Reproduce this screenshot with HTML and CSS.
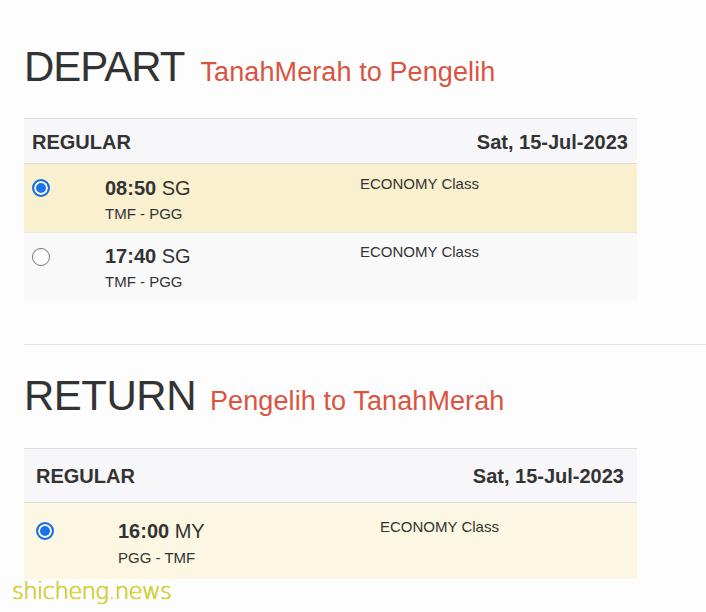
FILE: index.html
```html
<!DOCTYPE html>
<html lang="en">
<head>
    <meta charset="UTF-8">
    <meta name="viewport" content="width=device-width, initial-scale=1.0">
    <title>Select Trip</title>
    <link rel="stylesheet" href="styles.css">
</head>
<body>
    <div class="page">
        <!-- Ida -->
        <section class="leg depart">
            <h2 class="leg-title">DEPART<span class="route">TanahMerah to Pengelih</span></h2>
            <div class="trip-table">
                <div class="trip-head">
                    <span>REGULAR</span>
                    <span>Sat, 15-Jul-2023</span>
                </div>
                <label class="trip-row selected">
                    <input type="radio" name="depart" checked>
                    <div class="trip-time">
                        <div class="time"><b>08:50</b> SG</div>
                        <div class="code">TMF - PGG</div>
                    </div>
                    <div class="trip-class">ECONOMY Class</div>
                </label>
                <label class="trip-row">
                    <input type="radio" name="depart">
                    <div class="trip-time">
                        <div class="time"><b>17:40</b> SG</div>
                        <div class="code">TMF - PGG</div>
                    </div>
                    <div class="trip-class">ECONOMY Class</div>
                </label>
            </div>
        </section>

        <hr class="divider">

        <!-- Volta -->
        <section class="leg return">
            <h2 class="leg-title">RETURN<span class="route">Pengelih to TanahMerah</span></h2>
            <div class="trip-table">
                <div class="trip-head">
                    <span>REGULAR</span>
                    <span>Sat, 15-Jul-2023</span>
                </div>
                <label class="trip-row selected">
                    <input type="radio" name="return" checked>
                    <div class="trip-time">
                        <div class="time"><b>16:00</b> MY</div>
                        <div class="code">PGG - TMF</div>
                    </div>
                    <div class="trip-class">ECONOMY Class</div>
                </label>
            </div>
        </section>
    </div>

    <div class="watermark">shicheng.news</div>
</body>
</html>
```

FILE: styles.css
```css
/* Estilo do corpo */
body {
    font-family: "Liberation Sans", Arial, sans-serif;
    background-color: #fdfdfd;
    color: #333;
    margin: 0;
    padding: 0;
}

/* Contêiner principal */
.page {
    padding: 46px 0 0 24px;
}

/* Título de cada trecho */
.leg-title {
    margin: 0 0 30px;
    font-size: 42px;
    font-weight: normal;
    line-height: 42px;
    letter-spacing: -1px;
    color: #333;
}

.route {
    margin-left: 16px;
    font-size: 27px;
    line-height: 27px;
    letter-spacing: 0.1px;
    color: #da5440;
}

/* Tabela de viagens */
.trip-table {
    width: 613px;
    border-top: 1px solid #dedede;
}

.trip-head {
    display: flex;
    justify-content: space-between;
    padding: 13px 9px 11px 8px;
    background-color: #f7f7f9;
    border-bottom: 1px solid #dedede;
    font-size: 20px;
    font-weight: bold;
    line-height: 20px;
}

.trip-row {
    display: grid;
    grid-template-columns: 73px 255px 1fr;
    align-items: start;
    padding: 10.5px 8px 9px;
    background-color: #f9f9fa;
    cursor: pointer;
}

.trip-row + .trip-row {
    border-top: 1px solid #e6e6e6;
}

.trip-row.selected {
    background-color: #f9f0cf;
}

/* Botão de rádio */
.trip-row input {
    appearance: none;
    -webkit-appearance: none;
    width: 18px;
    height: 18px;
    margin: 4.5px 0 0 -0.5px;
    border: 1.5px solid #767676;
    border-radius: 50%;
    background-color: #fff;
    box-sizing: border-box;
}

.trip-row input:checked {
    border: 2px solid #1a6fe0;
    background-color: #1a73e8;
    box-shadow: inset 0 0 0 2px #fff;
}

.trip-time {
    margin-top: 3px;
}

.time {
    font-size: 20px;
    line-height: 20px;
}

.code {
    margin-top: 7px;
    font-size: 15px;
    line-height: 18px;
}

.trip-class {
    font-size: 15px;
    line-height: 18px;
}

/* Linha divisória */
.divider {
    margin: 44px 0 30px;
    border: none;
    border-top: 1px solid #e4e4e6;
}

/* Ajustes do trecho de volta */
.return .leg-title {
    letter-spacing: -0.5px;
    margin-bottom: 31px;
}

.return .route {
    margin-left: 14px;
}

.return .trip-head {
    padding: 17px 13px 16px 12px;
}

.return .trip-row {
    grid-template-columns: 81.5px 262px 1fr;
    padding: 15px 12.5px 12.5px;
}

.return .trip-row input {
    margin-top: 3.5px;
}

.return .code {
    margin-top: 7.5px;
}

.return .trip-row.selected {
    background-color: #fcf7e2;
}

/* Marca d'água */
.watermark {
    position: absolute;
    left: 12px;
    top: 576px;
    font-family: "DejaVu Sans", sans-serif;
    font-size: 23px;
    font-weight: 200;
    line-height: 30px;
    letter-spacing: -0.8px;
    color: #e2dc10;
    text-shadow: 0 0 1px #8a8830;
}
```
